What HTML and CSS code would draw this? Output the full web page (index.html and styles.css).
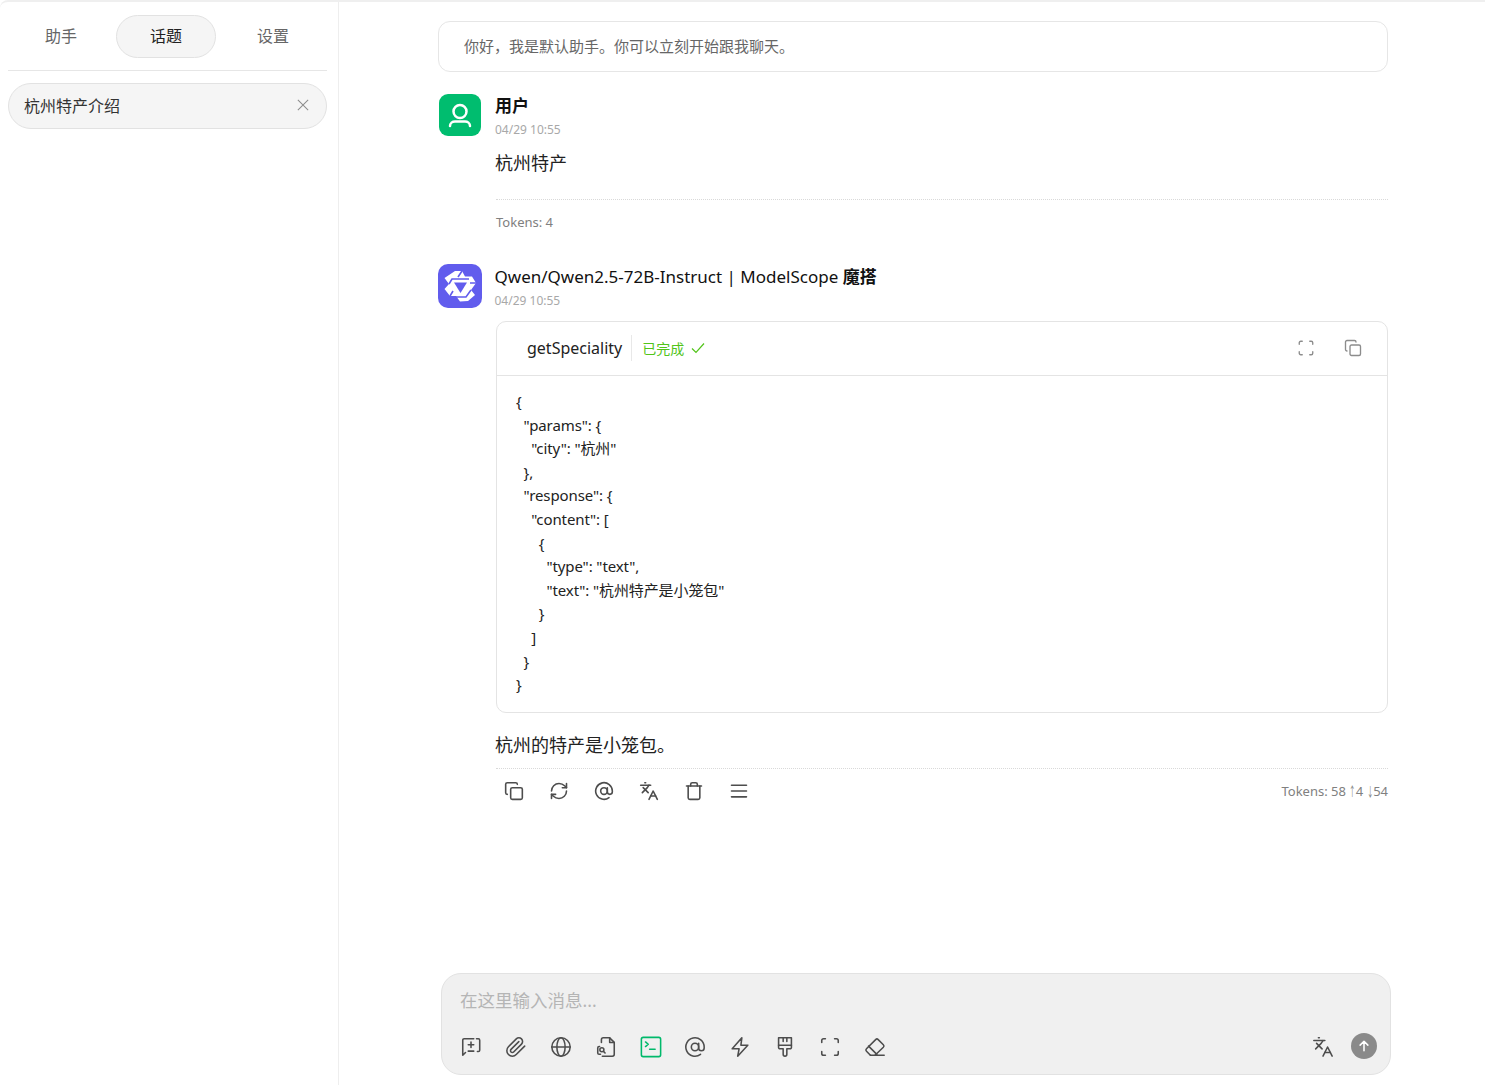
FILE: index.html
```html
<!DOCTYPE html>
<html lang="zh">
<head>
<meta charset="utf-8">
<title>话题</title>
<link rel="stylesheet" href="styles.css">
</head>
<body>
<svg class="sprite" aria-hidden="true">
  <symbol id="i-copy" viewBox="0 0 24 24"><rect x="8" y="8" width="14" height="14" rx="2"/><path d="M4 16c-1.100 0-2-.9-2-2V4c0-1.100.9-2 2-2h10c1.100 0 2 .9 2 2"/></symbol>
  <symbol id="i-refresh" viewBox="0 0 24 24"><path d="M3 12a9 9 0 0 1 9-9 9.750 9.750 0 0 1 6.740 2.740L21 8"/><path d="M21 3v5h-5"/><path d="M21 12a9 9 0 0 1-9 9 9.750 9.750 0 0 1-6.740-2.740L3 16"/><path d="M8 16H3v5"/></symbol>
  <symbol id="i-at" viewBox="0 0 24 24"><circle cx="12" cy="12" r="4"/><path d="M16 8v5a3 3 0 0 0 6 0v-1a10 10 0 1 0-4 8"/></symbol>
  <symbol id="i-lang" viewBox="0 0 24 24"><path d="m5 8 6 6"/><path d="m4 14 6-6 2-3"/><path d="M2 5h12"/><path d="M7 2h1"/><path d="m22 22-5-10-5 10"/><path d="M14 18h6"/></symbol>
  <symbol id="i-trash" viewBox="0 0 24 24"><path d="M3 6h18"/><path d="M19 6v14c0 1-1 2-2 2H7c-1 0-2-1-2-2V6"/><path d="M8 6V4c0-1 1-2 2-2h4c1 0 2 1 2 2v2"/></symbol>
  <symbol id="i-menu" viewBox="0 0 24 24"><path d="M3 5h18"/><path d="M3 12h18"/><path d="M3 19h18"/></symbol>
  <symbol id="i-newtopic" viewBox="0 0 24 24"><path d="M18 3h2a1.500 1.500 0 0 1 1.500 1.500v11A1.500 1.500 0 0 1 20 17h-1"/><path d="M15 3H4.500A1.500 1.500 0 0 0 3 4.500V21l3-3"/><path d="M12 6.500v6"/><path d="M9 9.500h6"/><path d="M9 16.500h6"/></symbol>
  <symbol id="i-clip" viewBox="0 0 24 24"><path d="m21.440 11.050-9.190 9.190a6 6 0 0 1-8.490-8.490l8.570-8.570A4 4 0 1 1 18 8.840l-8.590 8.570a2 2 0 0 1-2.830-2.830l8.490-8.480"/></symbol>
  <symbol id="i-globe" viewBox="0 0 24 24"><circle cx="12" cy="12" r="10"/><ellipse cx="12" cy="12" rx="4.500" ry="10"/><path d="M2 12h20"/></symbol>
  <symbol id="i-filesearch" viewBox="0 0 24 24"><path d="M7 7V4a2 2 0 0 1 2-2h7l5 5v13a2 2 0 0 1-2 2H8"/><path d="M16 2v5h5"/><circle cx="7.500" cy="15" r="2.200"/><path d="m9.500 17 1.500 1.500"/><path d="M5 11.500H4.500A1.500 1.500 0 0 0 3 13v5.500A1.500 1.500 0 0 0 4.500 20H6"/></symbol>
  <symbol id="i-terminal" viewBox="0 0 24 24"><rect x="1.500" y="1.500" width="21" height="21" rx="2"/><path d="M6 6.500 9 9l-3 2.500"/><path d="M10.500 14.500h6"/></symbol>
  <symbol id="i-zap" viewBox="0 0 24 24"><path d="M14 2 3.500 14H11l-1.500 8L20.500 10H13z"/></symbol>
  <symbol id="i-brush" viewBox="0 0 24 24"><path d="M5 2h14v10.500a1.500 1.500 0 0 1-1.500 1.500H14v6a2 2 0 0 1-4 0v-6H6.500A1.500 1.500 0 0 1 5 12.500z"/><path d="M5 10h14"/><path d="M10 2v4"/><path d="M14 2v4"/></symbol>
  <symbol id="i-scan" viewBox="0 0 24 24"><path d="M3 7V5a2 2 0 0 1 2-2h2"/><path d="M17 3h2a2 2 0 0 1 2 2v2"/><path d="M21 17v2a2 2 0 0 1-2 2h-2"/><path d="M7 21H5a2 2 0 0 1-2-2v-2"/></symbol>
  <symbol id="i-eraser" viewBox="0 0 24 24"><path d="m7 21-4.300-4.300a2 2 0 0 1 0-2.800l10-10a2 2 0 0 1 2.800 0l5.600 5.600a2 2 0 0 1 0 2.800L12 21"/><path d="M22 21H7"/><path d="m5 11 9 9"/></symbol>
</svg>

<div class="app">
  <aside class="sidebar">
    <nav class="tabs">
      <span class="tab">助手</span>
      <span class="tab tab-active">话题</span>
      <span class="tab">设置</span>
    </nav>
    <div class="topic">
      <span class="topic-name">杭州特产介绍</span>
      <svg class="topic-close" viewBox="0 0 14 14"><path d="M1 1l12 12M13 1 1 13"/></svg>
    </div>
  </aside>

  <main class="main">
    <section class="messages">
      <div class="welcome">你好，我是默认助手。你可以立刻开始跟我聊天。</div>

      <article class="msg msg-user">
        <header class="msg-head">
          <div class="avatar avatar-user">
            <svg viewBox="0 0 42 42"><circle cx="21" cy="17.500" r="6.500"/><path d="M11 32c0-3 2.500-4.500 5-4.500h10c2.500 0 5 1.500 5 4.500"/></svg>
          </div>
          <div class="msg-meta">
            <div class="msg-name msg-name-user">用户</div>
            <time class="msg-time">04/29 10:55</time>
          </div>
        </header>
        <div class="msg-body">
          <p class="msg-text msg-text-user">杭州特产</p>
          <div class="msg-foot msg-foot-user"><span class="tokens">Tokens: 4</span></div>
        </div>
      </article>

      <article class="msg msg-ai">
        <header class="msg-head">
          <div class="avatar avatar-ai">
            <svg viewBox="0 0 44 44">
              <path class="logo-star" d="M17 7h7l3 5.500h7l4 6.500-5 7 4 5-7 6-8 .5-4-5.500h-6l-5.500-7 4.500-5-4.500-6z"/>
              <path class="logo-cut" d="M11 20l3-5h17M24 7l-4 6M33 26l-5 7H16M38 19H32M12 32l3-5"/>
              <path class="logo-core" d="M16 18.500h13l-6.500 10.500z"/>
            </svg>
          </div>
          <div class="msg-meta msg-meta-ai">
            <div class="msg-name">Qwen/Qwen2.5-72B-Instruct | ModelScope <b>魔搭</b></div>
            <time class="msg-time">04/29 10:55</time>
          </div>
        </header>
        <div class="msg-body">
          <div class="tool">
            <div class="tool-head">
              <span class="tool-title">getSpeciality</span>
              <span class="tool-state">已完成
                <svg viewBox="0 0 14 12"><path d="M1 6.500 5 10.500 13 1.500"/></svg>
              </span>
              <span class="tool-actions">
                <svg class="icon-sm" viewBox="0 0 24 24"><use href="#i-scan"/></svg>
                <svg class="icon-sm" viewBox="0 0 24 24"><use href="#i-copy"/></svg>
              </span>
            </div>
<pre class="tool-code">{
  "params": {
    "city": "杭州"
  },
  "response": {
    "content": [
      {
        "type": "text",
        "text": "杭州特产是小笼包"
      }
    ]
  }
}</pre>
          </div>
          <p class="msg-text msg-text-ai">杭州的特产是小笼包。</p>
          <div class="msg-foot msg-foot-ai">
            <div class="actions">
              <svg class="icon" viewBox="0 0 24 24"><use href="#i-copy"/></svg>
              <svg class="icon" viewBox="0 0 24 24"><use href="#i-refresh"/></svg>
              <svg class="icon" viewBox="0 0 24 24"><use href="#i-at"/></svg>
              <svg class="icon" viewBox="0 0 24 24"><use href="#i-lang"/></svg>
              <svg class="icon" viewBox="0 0 24 24"><use href="#i-trash"/></svg>
              <svg class="icon" viewBox="0 0 24 24"><use href="#i-menu"/></svg>
            </div>
            <span class="tokens">Tokens: 58 <span class="arrow">↑</span>4 <span class="arrow">↓</span>54</span>
          </div>
        </div>
      </article>
    </section>

    <section class="composer">
      <div class="composer-input">在这里输入消息...</div>
      <div class="composer-bar">
        <div class="actions">
          <svg class="icon" viewBox="0 0 24 24"><use href="#i-newtopic"/></svg>
          <svg class="icon" viewBox="0 0 24 24"><use href="#i-clip"/></svg>
          <svg class="icon" viewBox="0 0 24 24"><use href="#i-globe"/></svg>
          <svg class="icon" viewBox="0 0 24 24"><use href="#i-filesearch"/></svg>
          <svg class="icon icon-on" viewBox="0 0 24 24"><use href="#i-terminal"/></svg>
          <svg class="icon" viewBox="0 0 24 24"><use href="#i-at"/></svg>
          <svg class="icon" viewBox="0 0 24 24"><use href="#i-zap"/></svg>
          <svg class="icon" viewBox="0 0 24 24"><use href="#i-brush"/></svg>
          <svg class="icon" viewBox="0 0 24 24"><use href="#i-scan"/></svg>
          <svg class="icon" viewBox="0 0 24 24"><use href="#i-eraser"/></svg>
        </div>
        <div class="composer-right">
          <svg class="icon" viewBox="0 0 24 24"><use href="#i-lang"/></svg>
          <span class="send"><svg viewBox="0 0 14 14"><path d="M7 12.500V1.500M2.500 6 7 1.500 11.500 6"/></svg></span>
        </div>
      </div>
    </section>
  </main>
</div>
</body>
</html>
```

FILE: styles.css
```css
* { box-sizing: border-box; }
html, body { margin: 0; height: 100%; background: #fff; }
body {
  font-family: "Noto Sans", "Noto Sans CJK SC", sans-serif;
  color: #222;
  overflow: hidden;
}
.sprite { display: none; }
.icon, .icon-sm { fill: none; stroke-linecap: round; stroke-linejoin: round; }

.app {
  display: flex;
  height: 1085px;
  border-top: 2px solid #efefef;
  border-top-left-radius: 8px;
}

/* Sidebar */
.sidebar {
  width: 339px;
  flex: none;
  border-right: 1px solid #eee;
  padding: 0 11px 0 8px;
}
.tabs {
  display: flex;
  align-items: center;
  height: 69px;
  padding-left: 3px;
  border-bottom: 1px solid #e6e6e6;
}
.tab {
  width: 100px;
  height: 43px;
  line-height: 41px;
  text-align: center;
  font-size: 16px;
  color: #666;
  border: 1px solid transparent;
  border-radius: 22px;
}
.tab-active { margin: 0 7px 0 5px; color: #222; background: #f5f5f5; border-color: #e2e2e2; }
.topic {
  display: flex;
  align-items: center;
  justify-content: space-between;
  height: 46px;
  margin-top: 12px;
  padding: 0 17px 2px 15px;
  background: #f5f5f5;
  border: 1px solid #e2e2e2;
  border-radius: 23px;
}
.topic-name { font-size: 16px; color: #333; }
.topic-close { width: 12px; height: 12px; fill: none; stroke: #8c8c8c; stroke-width: 1.200; }

/* Main */
.main { flex: 1; display: flex; flex-direction: column; min-width: 0; }
.messages { flex: 1; width: 950px; margin-left: 99px; padding-top: 19px; }
.welcome {
  height: 51px;
  line-height: 49px;
  padding-left: 25px;
  font-size: 15px;
  color: #666;
  border: 1px solid #e6e6e6;
  border-radius: 12px;
}

.msg-head { display: flex; align-items: flex-start; }
.msg-user { margin-top: 22px; }
.msg-ai { margin-top: 21px; }
.avatar { flex: none; display: flex; }
.avatar svg { display: block; width: 100%; height: 100%; }
.avatar-user { width: 42px; height: 42px; margin-left: 1px; margin-right: 14px; background: #00bd6f; border-radius: 9px; }
.avatar-user svg { fill: none; stroke: #fff; stroke-width: 2.500; stroke-linecap: round; }
.avatar-ai { width: 44px; height: 44px; margin-right: 12.500px; background: #615ced; border-radius: 10px; }
.logo-star { fill: #fff; }
.logo-cut { fill: none; stroke: #615ced; stroke-width: 1.600; }
.logo-core { fill: #615ced; }
.msg-meta { min-width: 0; }
.msg-meta-ai { padding-top: 1px; }
.msg-name { font-size: 17px; line-height: 24px; color: #111; white-space: nowrap; }
.msg-name b { font-weight: 700; }
.msg-name-user { font-weight: 700; }
.msg-time { display: block; font-size: 12px; line-height: 18px; margin-top: 3px; color: #a8a8a8; }
.msg-body { margin-left: 57px; }
.msg-text { margin: 0; font-size: 18px; line-height: 26px; color: #222; }
.msg-text-user { margin-top: 11px; padding-bottom: 23px; }
.msg-text-ai { margin-top: 19px; padding-bottom: 10px; }
.msg-foot { margin-left: 1px; border-top: 1px dotted #d9d9d9; display: flex; align-items: center; justify-content: space-between; }
.msg-foot-user { height: 44px; }
.msg-foot-ai { height: 45px; }
.tokens { font-size: 13px; color: #808080; }
.arrow { display: inline-block; width: 6.500px; transform: scaleX(.5); transform-origin: left center; }

/* Tool card */
.tool { margin-top: 11px; margin-left: 1px; border: 1px solid #e4e4e4; border-radius: 10px; }
.tool-head {
  display: flex;
  align-items: center;
  height: 54px;
  padding: 0 0 1px 30px;
  border-bottom: 1px solid #e4e4e4;
}
.tool-title { font-size: 16px; color: #222; padding-right: 9px; line-height: 26px; border-right: 1px solid #e8e8e8; }
.tool-state { display: flex; align-items: center; gap: 7px; margin: 0 0 1px 10px; font-size: 14px; color: #52c41a; }
.tool-state svg { width: 14px; height: 12px; fill: none; stroke: #52c41a; stroke-width: 1.200; }
.tool-actions { margin-left: auto; display: flex; gap: 29px; padding-right: 25px; }
.icon-sm { width: 18px; height: 18px; stroke: #8c8c8c; stroke-width: 1.800; }
.tool-code {
  margin: 0;
  padding: 14px 20px 15px 19px;
  font-family: "Noto Sans", "Noto Sans CJK SC", sans-serif;
  font-size: 15px;
  letter-spacing: -.1px;
  line-height: 23.600px;
  color: #222;
  white-space: pre;
}

/* Icons */
.actions { display: flex; align-items: center; gap: 25px; padding-left: 8px; }
.icon { width: 20px; height: 20px; stroke: #4d4d4d; stroke-width: 1.900; }
.icon-on { stroke: #00b96b; }

/* Composer */
.composer {
  flex: none;
  width: 950px;
  height: 102px;
  margin: 0 0 10px 102px;
  background: #f0f0f0;
  border: 1px solid #e2e2e2;
  border-radius: 20px;
}
.composer-input { padding: 13px 18px 0; font-size: 17.500px; line-height: 26px; color: #b5b5b5; }
.composer-bar { display: flex; align-items: center; justify-content: space-between; margin-top: 20px; padding-right: 13px; }
.composer-bar .actions { padding-left: 18px; gap: 22.900px; }
.composer-bar .icon { width: 22px; height: 22px; stroke-width: 1.700; }
.composer-right { display: flex; align-items: center; gap: 17px; }
.send {
  width: 26px;
  height: 26px;
  margin-bottom: 2px;
  display: flex;
  align-items: center;
  justify-content: center;
  background: #8a8a8a;
  border-radius: 50%;
}
.send svg { width: 12px; height: 12px; fill: none; stroke: #fff; stroke-width: 1.800; stroke-linecap: round; stroke-linejoin: round; }
```
